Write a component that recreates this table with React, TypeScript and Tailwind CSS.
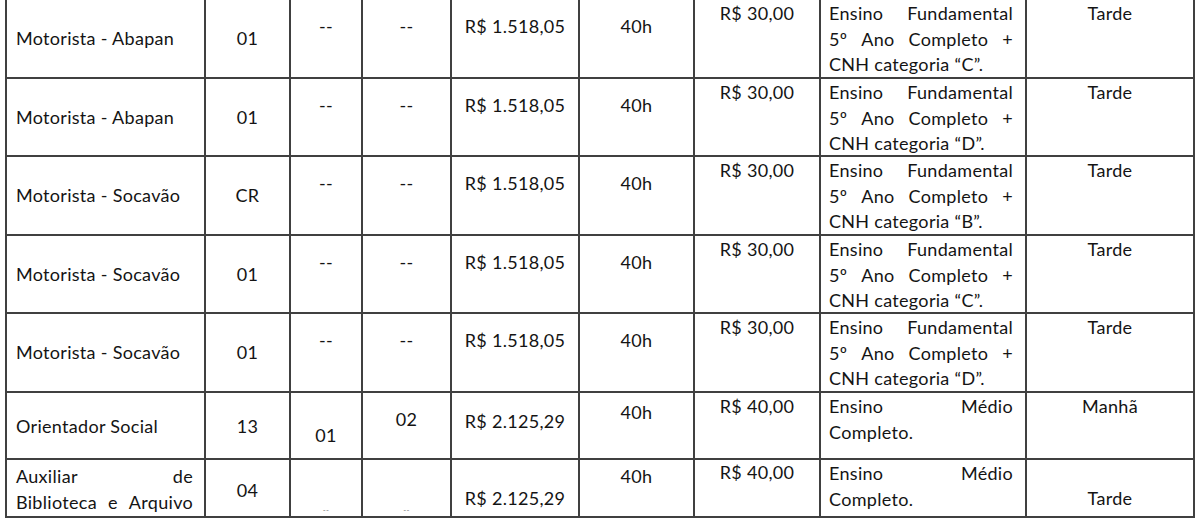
import React from "react";

const font = { fontFamily: "Lato, 'Open Sans', sans-serif" };

const Cell = ({ className = "", children }: { className?: string; children?: React.ReactNode }) => (
  <div className={`border-r-2 border-b-2 border-[#404040] ${className}`}>{children}</div>
);

// justified line: words spread across the cell width
const Just = ({ words }: { words: string[] }) => (
  <div className="flex justify-between">
    {words.map((w, i) => (
      <span key={i}>{w}</span>
    ))}
  </div>
);

const motoristas = [
  { cargo: "Motorista - Abapan", vagas: "01", cat: "C" },
  { cargo: "Motorista - Abapan", vagas: "01", cat: "D" },
  { cargo: "Motorista - Socavão", vagas: "CR", cat: "B" },
  { cargo: "Motorista - Socavão", vagas: "01", cat: "C" },
  { cargo: "Motorista - Socavão", vagas: "01", cat: "D" },
];

export default function App() {
  return (
    <div className="w-[1200px] h-[526px] bg-white overflow-hidden text-[#141414] text-[18px] tracking-[0.3px] leading-[25.6px]" style={font}>
      <div className="ml-[5px] w-[1190px] border-l-2 border-[#404040] grid grid-cols-[199px_85px_72px_89px_128px_115px_126px_206px_168px] grid-rows-[79px_78px_79px_78px_79px_67px_58px]">
        {motoristas.map((m, i) => (
          <React.Fragment key={i}>
            <Cell className="pl-[9px] pt-[26px]">{m.cargo}</Cell>
            <Cell className="text-center pt-[26px]">{m.vagas}</Cell>
            <Cell className="text-center pt-[14px]">--</Cell>
            <Cell className="text-center pt-[14px]">--</Cell>
            <Cell className="text-center pt-[14px]">R$ 1.518,05</Cell>
            <Cell className="text-center pt-[14px]">40h</Cell>
            <Cell className="text-center pt-[1px]">R$ 30,00</Cell>
            <Cell className="pl-[8px] pr-[12px] pt-[1px]">
              <Just words={["Ensino", "Fundamental"]} />
              <Just words={["5º", "Ano", "Completo", "+"]} />
              <div>CNH categoria “{m.cat}”.</div>
            </Cell>
            <Cell className="text-center pt-[1px]">Tarde</Cell>
          </React.Fragment>
        ))}

        <Cell className="pl-[9px] pt-[21px]">Orientador Social</Cell>
        <Cell className="text-center pt-[21px]">13</Cell>
        <Cell className="text-center pt-[30px]">01</Cell>
        <Cell className="text-center pt-[14px]">02</Cell>
        <Cell className="text-center pt-[16px]">R$ 2.125,29</Cell>
        <Cell className="text-center pt-[7px]">40h</Cell>
        <Cell className="text-center pt-[1px]">R$ 40,00</Cell>
        <Cell className="pl-[8px] pr-[12px] pt-[1px]">
          <Just words={["Ensino", "Médio"]} />
          <div>Completo.</div>
        </Cell>
        <Cell className="text-center pt-[1px]">Manhã</Cell>

        <Cell className="pl-[9px] pr-[11px] pt-[4px]">
          <Just words={["Auxiliar", "de"]} />
          <Just words={["Biblioteca", "e", "Arquivo"]} />
        </Cell>
        <Cell className="text-center pt-[18px]">04</Cell>
        <Cell className="flex items-end justify-center pb-[1px] text-[8px] leading-[10px] text-[#777]">--</Cell>
        <Cell className="flex items-end justify-center pb-[1px] text-[8px] leading-[10px] text-[#777]">--</Cell>
        <Cell className="text-center pt-[26px]">R$ 2.125,29</Cell>
        <Cell className="text-center pt-[4px]">40h</Cell>
        <Cell className="text-center pt-[0px]">R$ 40,00</Cell>
        <Cell className="pl-[8px] pr-[12px] pt-[1px]">
          <Just words={["Ensino", "Médio"]} />
          <div>Completo.</div>
        </Cell>
        <Cell className="text-center pt-[26px]">Tarde</Cell>
      </div>
    </div>
  );
}
